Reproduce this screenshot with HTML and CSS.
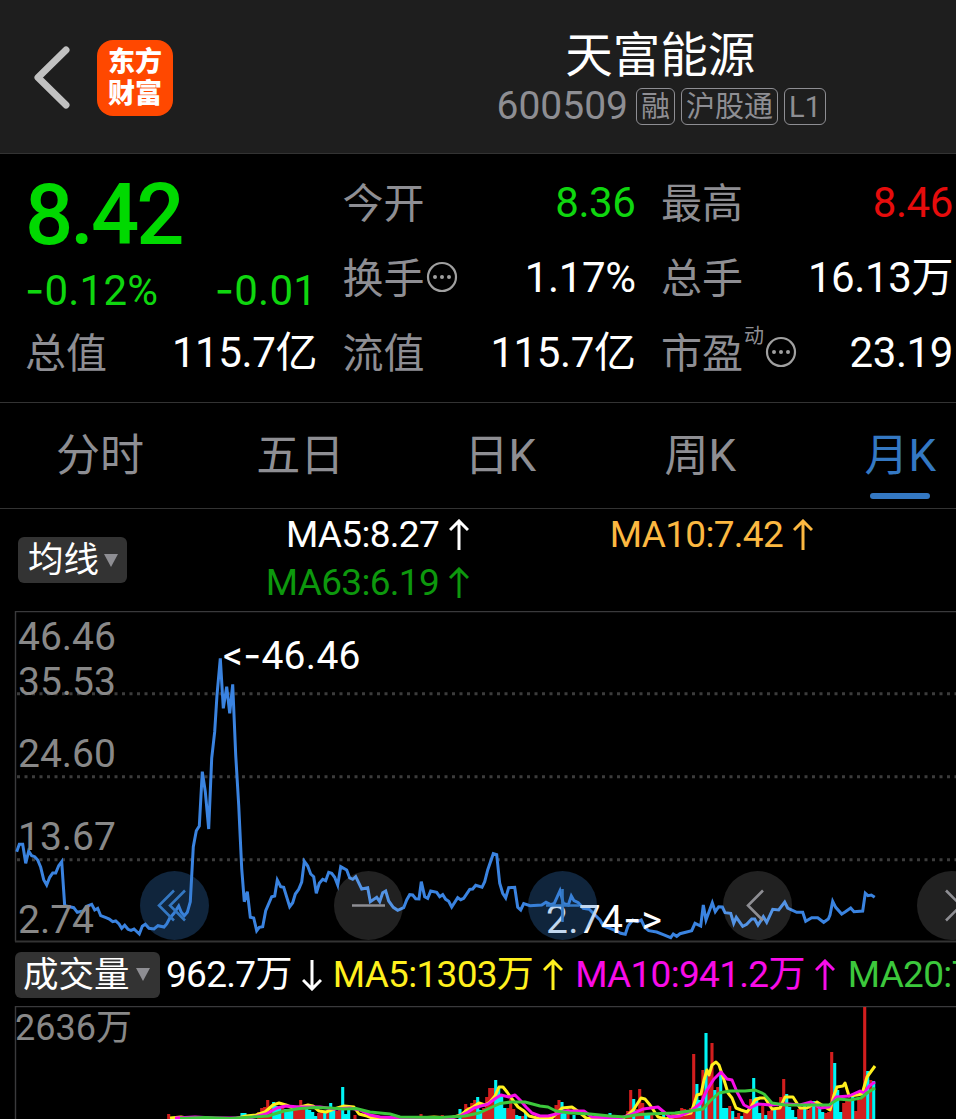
FILE: index.html
```
<!DOCTYPE html>
<html lang="zh-CN">
<head>
  <meta charset="UTF-8" />
  <title>天富能源 600509</title>
  <link rel="stylesheet" href="styles.css">
</head>
<body>

<header>
  <svg class="back-icon" viewBox="0 0 38 64">
    <path d="M33 4L5 31.500L33 59" />
  </svg>
  <div class="logo"><span>东方</span><span>财富</span></div>
  <div class="stock-title">
    <h1>天富能源</h1>
    <div class="stock-meta">
      <span class="code">600509</span>
      <span class="tag">融</span>
      <span class="tag">沪股通</span>
      <span class="tag">L1</span>
    </div>
  </div>
</header>

<section class="quote">
  <div class="quote-main">
    <div class="price">8.42</div>
    <div class="change down"><span><b class="minus">-</b>0.12%</span><span><b class="minus">-</b>0.01</span></div>
    <div class="row"><span class="label">总值</span><span>115.7亿</span></div>
  </div>
  <div class="quote-col">
    <div class="row"><span class="label">今开</span><span class="down">8.36</span></div>
    <div class="row">
      <span class="label">换手<svg class="more" viewBox="0 0 32 32"><circle cx="16" cy="16" r="14" /><path d="M9 16h0M16 16h0M23 16h0" /></svg></span>
      <span>1.17%</span>
    </div>
    <div class="row"><span class="label">流值</span><span>115.7亿</span></div>
  </div>
  <div class="quote-col">
    <div class="row"><span class="label">最高</span><span class="up">8.46</span></div>
    <div class="row"><span class="label">总手</span><span>16.13万</span></div>
    <div class="row">
      <span class="label">市盈<small>动</small><svg class="more" viewBox="0 0 32 32"><circle cx="16" cy="16" r="14" /><path d="M9 16h0M16 16h0M23 16h0" /></svg></span>
      <span>23.19</span>
    </div>
  </div>
</section>

<nav class="tabs">
  <a>分时</a>
  <a>五日</a>
  <a>日K</a>
  <a>周K</a>
  <a class="active">月K</a>
</nav>

<section class="ma-bar">
  <button class="pill">均线<i></i></button>
  <div class="ma-list">
    <span class="ma5">MA5:8.27<svg class="arrow" viewBox="0 0 20 32"><path d="M10 31V2M1 11L10 2L19 11" /></svg></span>
    <span class="ma10">MA10:7.42<svg class="arrow" viewBox="0 0 20 32"><path d="M10 31V2M1 11L10 2L19 11" /></svg></span>
    <span class="ma63">MA63:6.19<svg class="arrow" viewBox="0 0 20 32"><path d="M10 31V2M1 11L10 2L19 11" /></svg></span>
  </div>
</section>

<section class="price-chart">
  <svg viewBox="0 611 956 332">
    <!-- frame and grid -->
    <path class="frame" d="M960 611.500H15.500V941.500" />
    <path class="frame-bottom" d="M15 941.500H956" />
    <path class="grid" d="M17 693.700H956M17 776.800H956M17 859.800H956" />
    <!-- monthly close -->
    <polyline class="close-line" points="16.700,851.700 19.300,844.300 22.700,844.300 25.700,863.300 28.700,851 31.700,855.700 34.700,856.700 37.700,860 40.700,867.300 43.700,879.700 46.700,885 49.700,877.300 52.700,873 55.700,873 58.700,865.700 61.700,861.700 64.700,905.700 70.700,907 73.700,907.700 77.300,912.300 83.300,911 87.300,906 91.700,904.300 94.700,910 97.700,908.300 100.700,915.700 106,917.700 109.300,919 112.700,921.700 115.700,921 119,924 121.700,928.300 124.700,925.300 128,929.300 131,930.300 134,929 139.300,934 142.300,926.300 145.300,924.300 149,928.300 154,929 158,925.700 164,927 166.700,924 170,917.700 174,913.300 178.700,906 181.300,912.300 184.300,915.700 187.300,912.300 190.300,901.700 193.300,846.700 196.300,830.700 199.300,826 202.300,771.700 205.300,791.700 208.700,829 211.700,758.300 214.700,731.700 217,695 220.300,658.300 223.300,708.300 226.700,686.700 229.700,713.300 232.700,684.300 235.700,755 238.700,805 241.700,868.300 244.300,901.700 247.300,891.700 250.300,917.300 253.700,918 256.700,930.700 259.300,927.300 262.700,926.700 265.700,910.700 271.700,896.700 274.700,896 277.300,880 280.700,886.700 283.700,887.300 289.700,906.700 292.700,902.700 295.300,894 298.700,889.300 301.700,882 304.300,861.300 307.700,866 310.700,874 313.700,876.700 316.300,893.300 319.300,883.300 322.700,879.300 325.700,880.700 328.700,872.300 331.700,873.300 334.700,877.300 337.700,885 340.700,866.700 346.700,870 349.700,878 352.700,879.300 355.700,876.700 361.700,889 367.700,887.700 370.300,901.700 376.700,897.300 379.700,901.700 382.700,892.700 385.700,891 388.700,901 393.300,907.300 397.700,910.300 403.700,907.700 406.700,900 409.700,894.700 412.700,895 415.700,898.700 419,899 421.300,881.700 424.700,896.700 427.700,898.300 430.700,891 436.700,892.300 439.700,896.700 442.700,894.700 445.700,899.300 448.700,901.300 451.700,907 457.700,897.700 460.700,899.700 463.700,898.300 469.700,889.300 472.700,889 475.700,885.300 482,887.300 484.700,881.700 487.700,870 493.300,853.700 496.700,854.700 499.700,883.300 502.700,893.300 505.700,898 508.700,887.700 514.700,887.300 517.700,907.300 520.700,910 523.700,903.500 530,905.700 541.700,905 546,902.300 550.700,904.700 554.300,903.300 560,890.700 563.300,903.300 568.300,905 571.300,896 574,900.700 578.300,902.700 583.300,908.300 589.300,909.300 595,915 600,920 603.300,926 610,928.300 616.700,931 620.700,933.300 625.300,934.300 628,926 632.700,920 637.300,921.700 641.300,920 644.700,927.300 648.700,930.700 656.700,932 663.300,934.700 670.700,937.700 673.300,934 676.700,936.300 680,933.700 691.700,930.700 695,923.300 700.700,926 703.300,905 706,920 712.300,902.700 715.300,911.700 718.700,906.700 722.300,907 725,912.700 730.700,913.300 733.700,923.300 736.300,917.300 742.700,926.300 746.700,924.300 751.700,919 754.700,919 758,925 763.300,916.700 766.700,922.300 772.700,909.300 778.700,910 784.700,902 787.700,908 796.700,912.300 802.700,912.300 805.700,921.300 811.700,917.700 817.700,917.700 823.700,922.300 828.300,919 830,915 832.700,901.300 835.700,907.300 841.700,914 845,912 850.700,908 854,911.700 862.700,911 865.300,893.300 868,895.700 871.300,895 874.700,897.300" />
    <g class="axis">
      <text x="18" y="649.500">46.46</text>
      <text x="18" y="694.800">35.53</text>
      <text x="18" y="766.800">24.60</text>
      <text x="18" y="849.800">13.67</text>
      <text x="18" y="932.800">2.74</text>
    </g>
    <text class="peak" x="223" y="669">&lt;<tspan class="minus">-</tspan>46.46</text>
    <text class="peak" x="546" y="933">2.74<tspan class="minus">-</tspan>&gt;</text>
  </svg>
  <div class="chart-controls">
    <button class="blue"><svg viewBox="0 0 69 69"><path d="M34 19.500L19 34.500L34 49.500M45 19.500L30 34.500L45 49.500" /></svg></button>
    <button><svg viewBox="0 0 69 69"><path d="M18 34.500H51" /></svg></button>
    <button class="blue"><svg viewBox="0 0 69 69"><path d="M18 34.500H51M34.500 18V51" /></svg></button>
    <button><svg viewBox="0 0 69 69"><path d="M40 19.500L25 34.500L40 49.500" /></svg></button>
    <button><svg viewBox="0 0 69 69"><path d="M29 19.500L44 34.500L29 49.500" /></svg></button>
  </div>
</section>

<section class="vol-bar">
  <button class="pill">成交量<i></i></button>
  <span class="vol-now">962.7万<svg class="arrow" viewBox="0 0 20 32"><path d="M10 1V30M1 21L10 30L19 21" /></svg></span>
  <span class="vol-ma5">MA5:1303万<svg class="arrow" viewBox="0 0 20 32"><path d="M10 31V2M1 11L10 2L19 11" /></svg></span>
  <span class="vol-ma10">MA10:941.2万<svg class="arrow" viewBox="0 0 20 32"><path d="M10 31V2M1 11L10 2L19 11" /></svg></span>
  <span class="vol-ma20">MA20:7</span>
</section>

<section class="vol-chart">
  <svg viewBox="0 1006 956 113">
    <path class="frame" d="M960 1006.500H15.500V1119" />
    <text class="vol-max" x="15" y="1039.500">2636万</text>
    <path class="bars-up" d="M168.700 1119V1114M258.700 1119V1112M261.700 1119V1108M264.700 1119V1107M267.700 1119V1100M270.700 1119V1107M282.700 1119V1108M294.700 1119V1110M297.700 1119V1108M300.700 1119V1100M303.700 1119V1108M318.700 1119V1113M321.700 1119V1112M327.700 1119V1112M336.700 1119V1111M339.700 1119V1108M355 1119V1115M421 1119V1114M442.300 1119V1115M463 1119V1113M465.700 1119V1104M468.700 1119V1107M471.700 1119V1103M474.700 1119V1100M483.700 1119V1108M486.700 1119V1097M489.700 1119V1088M492.700 1119V1088M507.700 1119V1108M510.700 1119V1099M513.700 1119V1109M522.700 1119V1116M556 1119V1105M559 1119V1100M568 1119V1109M627.700 1119V1111M630.700 1119V1090M636.700 1119V1109M639.700 1119V1089M642.700 1119V1103M651.700 1119V1115M669.700 1119V1115M672.700 1119V1114M675.700 1119V1113M678.700 1119V1112M681.700 1119V1108M684.700 1119V1109M687.700 1119V1110M690.700 1119V1108M693.700 1119V1054M702.900 1119V1070M708.900 1119V1075M712 1119V1043M717.700 1119V1087M729.700 1119V1106M735.700 1119V1117M738.700 1119V1113M744.700 1119V1113M747.700 1119V1112M750.700 1119V1099M762.700 1119V1106M768.700 1119V1111M771.700 1119V1110M777.700 1119V1107M780.700 1119V1097M783.700 1119V1079M798.700 1119V1109M801.700 1119V1107M807.700 1119V1110M810.700 1119V1105M816.700 1119V1105M825.700 1119V1113M828.700 1119V1112M831.700 1119V1052M843.700 1119V1103M846.700 1119V1100M849.700 1119V1100M855.700 1119V1111M858.700 1119V1100M861.700 1119V1098M864.700 1119V1007M870.700 1119V1080" />
    <path class="bars-down" d="M242 1119V1113M245 1119V1113M273.700 1119V1102M276.700 1119V1106M279.700 1119V1107M285.700 1119V1109M288.700 1119V1109M291.700 1119V1109M306.700 1119V1109M309.700 1119V1110M312.700 1119V1112M315.700 1119V1116M324.700 1119V1112M330.700 1119V1103M333.700 1119V1107M342.700 1119V1087M345.700 1119V1114M348.700 1119V1110M460 1119V1109M477.700 1119V1097M480.700 1119V1110M495.700 1119V1080M498.700 1119V1087M501.700 1119V1095M504.700 1119V1108M516.700 1119V1115M519.700 1119V1116M525.700 1119V1113M562 1119V1102M565 1119V1110M574 1119V1115M610 1119V1113M633.700 1119V1099M645.700 1119V1115M648.700 1119V1115M663.700 1119V1113M696.900 1119V1084M699.900 1119V1100M706 1119V1033M714.800 1119V1090M720.700 1119V1075M723.700 1119V1108M726.700 1119V1108M732.700 1119V1111M741.700 1119V1116M753.700 1119V1078M756.700 1119V1097M759.700 1119V1113M765.700 1119V1115M774.700 1119V1108M786.700 1119V1094M789.700 1119V1107M792.700 1119V1110M795.700 1119V1117M804.700 1119V1103M813.700 1119V1101M819.700 1119V1108M822.700 1119V1112M834.700 1119V1063M837.700 1119V1090M840.700 1119V1112M852.700 1119V1094M867.700 1119V1071M873.700 1119V1081" />
    <polyline class="line-ma5" points="170,1118 181,1117 190,1118.500 236,1118.500 246,1116 256,1115 265,1112 273,1105 279,1103 286,1105 293,1108 300,1107 308,1105 313,1106 319,1111 326,1112 334,1109 344,1106 354,1107 359,1114 367,1116 373,1118.500 420,1118 434,1117 450,1118 461,1115 467,1110 473,1107 479,1103 485,1105 490,1102 495,1096 499,1087 503,1087 507,1092 512,1099 518,1107 524,1111 529,1116 537,1118 552,1118 557,1113 562,1108 572,1107 579,1112 586,1118 600,1119 622,1119 628,1115 634,1109 641,1098 645,1099 650,1105 658,1117 666,1119 676,1116 691,1113 697,1095 701,1094 704,1080 707,1070 709,1075 712,1065 716,1062 719,1065 724,1080 728,1093 732,1098 736,1108 741,1110 747,1112 751,1107 755,1100 760,1098 765,1098 772,1109 780,1108 785,1097 793,1097 800,1108 807,1108 817,1102 825,1107 830,1110 834,1095 837,1087 843,1086 845,1083 849,1096 857,1095 862,1094 867,1077 875,1066" />
    <polyline class="line-ma10" points="175,1118 195,1117 215,1118 250,1118 266,1114 277,1108 286,1106 300,1107 320,1107 335,1109 350,1108 360,1110 370,1115 380,1117 400,1118 450,1118 460,1116 468,1112 474,1108 481,1106 488,1104 496,1098 501,1095 509,1097 515,1095 520,1100 526,1107 532,1113 540,1116 548,1116 556,1114 565,1111 584,1111 592,1117 620,1118 630,1115 643,1109 658,1107 670,1117 680,1116 691,1111 701,1103 707,1090 714,1079 721,1072 727,1079 732,1080 737,1092 744,1105 750,1108 758,1104 770,1105 788,1104 800,1105 811,1102 820,1108 829,1107 836,1097 849,1096 860,1091 864,1093 869,1086 875,1082" />
    <polyline class="line-ma20" points="180,1118.500 205,1117.500 230,1118.500 268,1116 284,1111 300,1108.500 315,1107.500 330,1108 344,1109 356,1108.500 370,1112 390,1114 400,1117 440,1117.500 465,1116 479,1113 490,1108 500,1103.500 511,1102 525,1102 540,1106 548,1107 556,1111 570,1113 590,1114 610,1116 625,1117 635,1115 648,1114 675,1113 690,1111 703,1109 710,1101 719,1093 730,1091 745,1091 755,1090 764,1094 772,1103 785,1105 815,1105 829,1105 838,1099 850,1100 861,1098 867,1093 875,1088" />
  </svg>
</section>

</body>
</html>
```
FILE: styles.css
```
* {
  box-sizing: border-box;
}

body {
  background-color: #000;
  font-family: Roboto, "Noto Sans CJK SC", sans-serif;
  margin: 0;
  padding: 0;
  color: #fff;
  overflow: hidden;
}

svg {
  display: block;
  fill: none;
}

button {
  border: none;
  padding: 0;
  color: #fff;
  font-family: inherit;
}

.minus {
  font-family: Inter, sans-serif;
  font-weight: 400;
  line-height: 1;
}

/* header */
header {
  height: 154px;
  background-color: #1e1e1e;
  border-bottom: 1px solid #333;
  display: flex;
  align-items: center;
  padding: 0 130px 0 33px;
}

.back-icon {
  width: 38px;
  height: 64px;
  margin-top: 3px;
  stroke: #c1c1c1;
  stroke-width: 7;
  stroke-linecap: round;
  stroke-linejoin: round;
}

.logo {
  width: 76px;
  height: 76px;
  margin: 3px 0 0 26px;
  border-radius: 16px;
  background-color: #ff4800;
  display: flex;
  flex-direction: column;
  align-items: center;
  justify-content: center;
  font-size: 27px;
  line-height: 32px;
  font-weight: 900;
}

.stock-title {
  margin: -3px 0 0 auto;
  display: flex;
  flex-direction: column;
  align-items: center;
}

.stock-title h1 {
  margin: 0 2px 0 0;
  font-size: 47.5px;
  font-weight: 400;
  line-height: 62px;
}

.stock-meta {
  display: flex;
  align-items: center;
  gap: 6px;
  height: 38px;
  color: #8e8e93;
}

.code {
  font-size: 39px;
  line-height: 38px;
  margin-right: 2px;
}

.tag {
  height: 37px;
  padding: 0 4px;
  border: 1px solid #8e8e93;
  border-radius: 6px;
  font-size: 29px;
  line-height: 36px;
}

/* quote panel */
.quote {
  height: 249px;
  padding: 11px 3px 0 25px;
  border-bottom: 1px solid #333;
  display: grid;
  grid-template-columns: 292px 293px 292px;
  justify-content: space-between;
}

.row, .change {
  display: flex;
  justify-content: space-between;
  align-items: center;
  height: 75px;
  padding-top: 1px;
  font-size: 42px;
  line-height: 74px;
  letter-spacing: -0.4px;
}

.price {
  height: 96px;
  padding-top: 2px;
  font-size: 85px;
  line-height: 96px;
  font-weight: 500;
  letter-spacing: -3px;
  color: #00d900;
}

.change {
  height: 54px;
  padding-top: 5px;
  line-height: 48px;
  letter-spacing: 0.2px;
}

.label {
  display: flex;
  align-items: center;
  padding-top: 2px;
  color: #8e8e93;
  font-size: 41px;
  line-height: 72px;
  letter-spacing: 0;
}

.label small {
  font-size: 20px;
  line-height: 20px;
  align-self: flex-start;
  margin: 8px 0 0 1px;
}

.more {
  width: 32px;
  height: 32px;
  margin: -4px 0 0 1px;
  stroke: #a0a0a0;
  stroke-width: 2.2;
}

.more path {
  stroke-width: 4;
  stroke-linecap: round;
}

.down {
  color: #0fd60f;
}

.up {
  color: #e60c0c;
}

/* period tabs */
.tabs {
  height: 106px;
  border-bottom: 1px solid #333;
  display: grid;
  grid-template-columns: repeat(5, 200.1px);
  overflow: hidden;
}

.tabs a {
  display: flex;
  flex-direction: column;
  align-items: center;
  color: #8e8e93;
  font-size: 44px;
  line-height: 106px;
}

.tabs .active {
  color: #3478c3;
}

.active::after {
  content: "";
  width: 60px;
  height: 6px;
  margin-top: -16px;
  border-radius: 3px;
  background-color: #3478c3;
}

/* moving averages */
.ma-bar {
  height: 102px;
  display: flex;
  padding-left: 18px;
}

.pill {
  display: flex;
  flex-shrink: 0;
  align-items: center;
  gap: 5px;
  height: 46px;
  padding: 0 9px 0 10px;
  border-radius: 6px;
  background-color: #333;
  font-size: 35.5px;
  line-height: 42px;
  white-space: nowrap;
}

.pill i {
  border: 7.5px solid transparent;
  border-top: 13px solid #8e8e93;
  border-bottom: none;
}

.ma-bar .pill {
  margin-top: 28px;
  width: 109px;
}

.ma-list {
  display: grid;
  grid-template-columns: 342px 344px;
  grid-auto-rows: 48px;
  padding-top: 2px;
}

.ma-list span, .vol-bar span {
  display: flex;
  align-items: center;
  justify-content: flex-end;
  font-size: 37px;
  line-height: 50px;
  letter-spacing: -0.7px;
  white-space: nowrap;
}

.arrow {
  width: 20px;
  height: 32px;
  margin-left: 10px;
  stroke: currentColor;
  stroke-width: 3;
}

.ma10 {
  color: #fcb841;
}

.ma63 {
  color: #0d980d;
}

/* price chart */
.price-chart {
  position: relative;
  height: 332px;
}

.price-chart > svg, .vol-chart svg {
  width: 956px;
  height: 100%;
}

.frame {
  stroke: #3a3a3c;
  stroke-width: 1.4;
}

.frame-bottom {
  stroke: #333;
  stroke-width: 2;
}

.grid {
  stroke: #3c3c3c;
  stroke-width: 3;
  stroke-dasharray: 3 4.5;
}

.close-line {
  stroke: #3a83e0;
  stroke-width: 3;
}

.axis, .vol-max {
  fill: #888;
  font-size: 39px;
}

.peak {
  fill: #fff;
  font-size: 39px;
  letter-spacing: 0.3px;
}

.chart-controls {
  position: absolute;
  left: 140px;
  top: 260px;
  display: flex;
  gap: 125.2px;
}

.chart-controls button {
  width: 69px;
  height: 69px;
  flex-shrink: 0;
  border-radius: 50%;
  background-color: rgba(255, 255, 255, 0.13);
  stroke: #8e8e93;
  stroke-width: 2.6;
}

.chart-controls .blue {
  background-color: rgba(52, 124, 200, 0.3);
  stroke: #3478c3;
}

/* volume */
.vol-bar {
  height: 63px;
  display: flex;
  align-items: center;
  padding-left: 15px;
}

.vol-bar .pill {
  width: 145px;
  margin-right: 6px;
  padding: 0 8px;
  gap: 6px;
}

.vol-bar .vol-ma5 {
  color: #fff01e;
  margin-left: 11px;
}

.vol-bar .vol-ma10 {
  color: #f80ce8;
  margin-left: 12px;
}

.vol-bar .vol-ma20 {
  color: #3cc83c;
  margin-left: 13px;
}

.vol-chart {
  height: 113px;
}

.vol-max {
  font-size: 36px;
}

.bars-up {
  stroke: #d21e1e;
  stroke-width: 3.1;
}

.bars-down {
  stroke: #00f5f5;
  stroke-width: 3.1;
}

.line-ma5, .line-ma10, .line-ma20 {
  stroke-width: 3;
  stroke-linejoin: round;
}

.line-ma5 {
  stroke: #fff01e;
}

.line-ma10 {
  stroke: #f80ce8;
}

.line-ma20 {
  stroke: #3cc83c;
}
```
